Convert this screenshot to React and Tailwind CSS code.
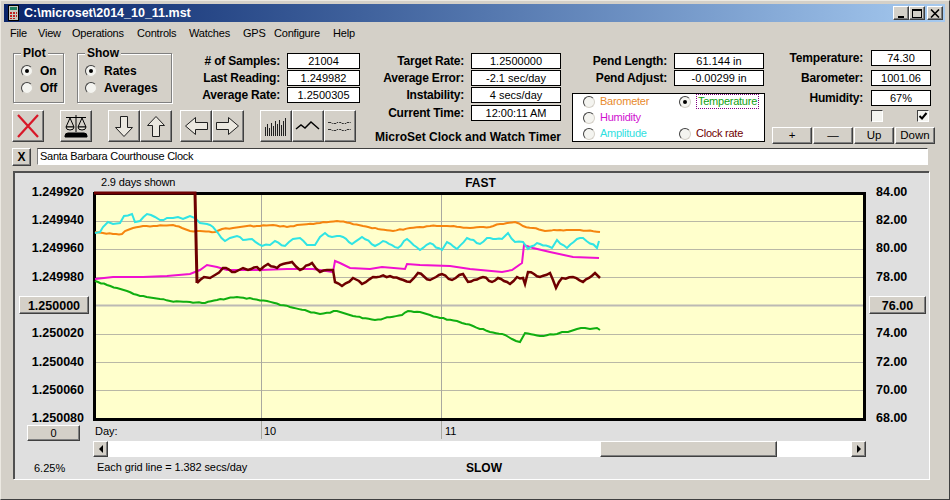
// App.jsx
import React from "react";

const bevel =
  "border border-t-white border-l-white border-r-[#404040] border-b-[#404040] bg-[#d4d0c8] shadow-[inset_-1px_-1px_0_#808080]";

const orange =
  "95,232 103,233 113,234 122,234 125,231 133,228 143,226 157,226 173,225 182,228 190,231 200,231 215,232 222,229 233,228 247,226 260,226 273,225 287,227 297,225 320,223 337,221 350,223 363,226 378,229 393,231 410,228 430,226 447,226 460,227 470,228 480,227 490,227 500,224 515,222 523,226 533,228 545,231 560,230 580,230 600,232";
const cyan =
  "95,233 100,232 103,227 108,222 113,224 120,223 124,216 132,214 135,222 140,221 147,214 155,217 160,220 167,218 173,218 178,217 183,219 190,216 195,218 200,223 207,224 213,227 218,233 225,241 230,238 237,236 243,240 252,239 262,246 270,245 275,241 285,246 293,239 300,238 307,245 315,245 320,237 325,233 332,237 337,236 343,237 352,244 362,237 375,246 383,241 398,248 407,239 420,250 430,243 442,250 447,242 457,249 467,238 480,244 487,238 493,239 502,239 508,233 515,242 523,242 528,249 537,243 552,248 557,240 567,248 577,239 583,238 597,248 599,241";
const magenta =
  "95,279 113,277 143,277 167,276 190,274 200,270 207,265 217,267 227,270 260,270 287,269 313,269 320,270 333,272 335,261 340,263 350,268 370,269 382,267 405,269 407,264 420,265 450,266 470,269 502,272 512,270 522,263 524,245 533,248 550,252 573,257 599,258";
const maroonTop = "94,193 195,193 197,283";
const maroon =
  "197,283 200,280 204,277 210,278 215,275 223,268 235,272 243,268 248,270 257,267 260,270 268,264 277,268 283,264 292,262 300,270 312,263 320,272 327,270 333,270 335,282 342,286 353,278 362,284 373,277 390,276 410,282 418,273 430,280 442,274 452,280 463,274 468,282 483,277 492,282 498,278 510,284 517,277 523,278 525,284 528,272 540,277 550,273 556,288 562,278 573,277 583,282 595,273 600,278";
const green =
  "95,281 107,285 127,291 140,296 160,299 170,301 190,302 202,303 217,300 237,297 253,299 267,301 290,307 320,314 337,311 353,316 375,320 402,315 408,311 420,312 440,318 457,321 462,323 473,326 490,332 505,335 512,339 520,342 525,333 540,336 557,334 562,332 568,332 577,329 585,328 590,329 597,328 600,330";

// the traced points are coarse, fill in the day to day wobble of the readings
const wobble = (points, amp) => {
  const pts = points.split(" ").map((p) => p.split(",").map(Number));
  const out = [];
  let n = 0;
  pts.forEach(([x, y], i) => {
    out.push(`${x},${y}`);
    const next = pts[i + 1];
    if (!next) return;
    const steps = Math.floor((next[0] - x) / 3);
    for (let s = 1; s < steps; s++) {
      n++;
      const t = s / steps;
      const off = Math.round(Math.sin(n * 2.7) * Math.cos(n * 1.3) * amp * 2) / 2;
      out.push(`${x + (next[0] - x) * t},${y + (next[1] - y) * t + off}`);
    }
  });
  return out.join(" ");
};

const leftAxis = ["1.249920", "1.249940", "1.249960", "1.249980", null, "1.250020", "1.250040", "1.250060"];
const rightAxis = ["84.00", "82.00", "80.00", "78.00", null, "74.00", "72.00", "70.00"];

const Radio = ({ on }) => (
  <span className="flex h-3 w-3 shrink-0 items-center justify-center rounded-full border border-t-[#404040] border-l-[#404040] border-r-[#d4d0c8] border-b-[#d4d0c8] bg-[#f4f4f0]">
    {on && <span className="h-1 w-1 rounded-full bg-black" />}
  </span>
);

const Group = ({ title, width, children }) => (
  <div
    className={`relative flex h-[50px] flex-col gap-[3px] border border-[#808080] pt-[10px] shadow-[inset_1px_1px_0_#fff,1px_1px_0_#fff] ${width}`}
  >
    <span className="absolute -top-[8px] left-[7px] bg-[#d4d0c8] px-[2px] text-[12px] leading-[15px] font-bold">
      {title}
    </span>
    {children}
  </div>
);

const GroupRadio = ({ on, label }) => (
  <div className="flex h-[14px] items-center gap-[7px] pl-[7px] text-[12px] font-bold">
    <Radio on={on} />
    {label}
  </div>
);

const Field = ({ label, value, labelWidth, fieldWidth, gap = "mr-[7px]" }) => (
  <div className="flex h-[16px] items-center">
    <span className={`${labelWidth} ${gap} text-right text-[12px] font-bold tracking-[-0.2px] whitespace-nowrap`}>
      {label}
    </span>
    <span className={`${fieldWidth} flex h-full items-center justify-center border border-black bg-white text-[11px]`}>
      {value}
    </span>
  </div>
);

const ToolButton = ({ children, className = "" }) => (
  <button className={`${bevel} flex h-[32px] w-[32px] items-center justify-center ${className}`}>{children}</button>
);

const Arrow = ({ points }) => (
  <svg width="26" height="26" viewBox="0 0 26 26">
    <polygon points={points} fill="#ebe8e0" stroke="#202020" strokeWidth="1" />
  </svg>
);

const SelectItem = ({ on, color, children }) => (
  <div className={`flex h-[16px] items-center gap-[5px] text-[11px] tracking-[-0.25px] ${color}`}>
    <Radio on={on} />
    {children}
  </div>
);

const SmallButton = ({ children }) => (
  <button className={`${bevel} flex h-[17px] w-[40px] items-center justify-center text-[11.5px]`}>{children}</button>
);

const TitleButton = ({ children }) => (
  <button className={`${bevel} flex h-[14px] w-[16px] items-center justify-center`}>{children}</button>
);

const Chart = () => (
  <svg width="773" height="229" viewBox="93 192 773 229" className="block overflow-visible">
    <rect x="94.5" y="193.5" width="770" height="226" fill="#ffffcc" />
    {[221, 249, 277, 334, 362, 390].map((y) => (
      <line key={y} x1="96" x2="863" y1={y + 0.5} y2={y + 0.5} stroke="#b9b8a6" />
    ))}
    <line x1="96" x2="863" y1="305.5" y2="305.5" stroke="#bcbab4" strokeWidth="2" />
    <line x1="261.5" x2="261.5" y1="195" y2="439" stroke="#aaa9a0" />
    <line x1="441.5" x2="441.5" y1="195" y2="439" stroke="#aaa9a0" />
    <rect x="94.5" y="193.5" width="770" height="226" fill="none" stroke="#000" strokeWidth="3" />
    <polyline points={wobble(orange, 0.5)} fill="none" stroke="#f5850f" strokeWidth="2" />
    <polyline points={magenta} fill="none" stroke="#f010d0" strokeWidth="2" />
    <polyline points={wobble(green, 0.5)} fill="none" stroke="#10ae10" strokeWidth="2" />
    <polyline points={wobble(cyan, 1)} fill="none" stroke="#30e4e4" strokeWidth="2" />
    <polyline points={maroonTop} fill="none" stroke="#6e0000" strokeWidth="3" />
    <polyline points={wobble(maroon, 1.2)} fill="none" stroke="#6e0000" strokeWidth="2.5" />
  </svg>
);

export default function App() {
  return (
    <div className="flex h-[500px] w-[950px] flex-col overflow-hidden border border-t-[#ece9e2] border-l-[#ece9e2] border-r-[#404040] border-b-[#404040] bg-[#d4d0c8] px-[3px] pt-[3px] font-['Liberation_Sans',Arial,sans-serif] text-black">
      {/* title bar */}
      <div className="mr-[1px] flex h-[18px] shrink-0 items-center bg-gradient-to-r from-[#0a246a] to-[#a6caf0] pr-[2px] pl-[4px]">
        <svg width="12" height="16" viewBox="0 0 12 16" className="mr-[4px]">
          <rect x="0.5" y="0.5" width="10" height="15" fill="#c8c8c0" stroke="#000" />
          <rect x="2" y="2" width="7" height="3" fill="#208060" />
          <path d="M2 7h2v2H2zM5 7h2v2H5zM8 7h1v2H8zM2 10h2v2H2zM5 10h2v2H5zM8 10h1v2H8zM2 13h2v1H2zM5 13h2v1H5z" fill="#c02020" />
        </svg>
        <span className="text-[12.5px] font-bold text-white">C:\microset\2014_10_11.mst</span>
        <div className="ml-auto flex">
          <TitleButton>
            <span className="mt-[7px] h-[2px] w-[6px] bg-black" />
          </TitleButton>
          <TitleButton>
            <span className="h-[9px] w-[10px] border border-t-2 border-black" />
          </TitleButton>
          <button className={`${bevel} ml-[2px] flex h-[14px] w-[16px] items-center justify-center`}>
            <svg width="10" height="9" viewBox="0 0 10 9">
              <path d="M1 0.5l8 8M9 0.5l-8 8" stroke="#000" strokeWidth="1.6" />
            </svg>
          </button>
        </div>
      </div>

      {/* menu */}
      <div className="flex h-[22px] shrink-0 items-center pl-[6px] text-[11px] tracking-[-0.2px]">
        <span className="w-[28px]">File</span>
        <span className="w-[34px]">View</span>
        <span className="w-[65px]">Operations</span>
        <span className="w-[52px]">Controls</span>
        <span className="w-[54px]">Watches</span>
        <span className="w-[31px]">GPS</span>
        <span className="w-[59px]">Configure</span>
        <span>Help</span>
      </div>

      {/* controls */}
      <div className="flex h-[104px] shrink-0 items-start pl-[8px]">
        <div className="flex w-[349px] flex-col pt-[9px]">
          <div className="flex items-start">
            <div className="ml-[1px] flex">
              <Group title="Plot" width="w-[51px]">
                <GroupRadio on label="On" />
                <GroupRadio label="Off" />
              </Group>
              <div className="ml-[13px]">
                <Group title="Show" width="w-[95px]">
                  <GroupRadio on label="Rates" />
                  <GroupRadio label="Averages" />
                </Group>
              </div>
            </div>
            <div className="flex flex-col gap-[1px]">
              <Field label="# of Samples:" value="21004" labelWidth="w-[108px]" fieldWidth="w-[73px]" />
              <Field label="Last Reading:" value="1.249982" labelWidth="w-[108px]" fieldWidth="w-[73px]" />
              <Field label="Average Rate:" value="1.2500305" labelWidth="w-[108px]" fieldWidth="w-[73px]" />
            </div>
          </div>
          <div className="mt-[7px] flex">
            <ToolButton>
              <svg width="26" height="26" viewBox="0 0 26 26">
                <path d="M3 2l20 22M23 2L3 24" stroke="#d81828" strokeWidth="2.2" />
              </svg>
            </ToolButton>
            <ToolButton className="ml-[16px]">
              <svg width="26" height="26" viewBox="0 0 26 26" fill="none" stroke="#000">
                <path d="M3 4.5h20M13 2v17M7 5l-4 9h8zM19 5l-4 9h8z" />
                <path d="M3 14a4 3 0 0 0 8 0zM15 14a4 3 0 0 0 8 0z" fill="#e8e4da" />
                <path d="M2 24v-1q0-3 3-3h16q3 0 3 3v1z" fill="#000" />
              </svg>
            </ToolButton>
            <ToolButton className="ml-[16px]">
              <Arrow points="9.5,3.5 16.5,3.5 16.5,14.5 21.5,14.5 13,23.5 4.5,14.5 9.5,14.5" />
            </ToolButton>
            <ToolButton>
              <Arrow points="9.5,23.5 16.5,23.5 16.5,12.5 21.5,12.5 13,3.5 4.5,12.5 9.5,12.5" />
            </ToolButton>
            <ToolButton className="ml-[8px]">
              <Arrow points="24.5,9.5 24.5,16.5 12.5,16.5 12.5,21.5 2.5,13 12.5,4.5 12.5,9.5" />
            </ToolButton>
            <ToolButton>
              <Arrow points="1.5,9.5 1.5,16.5 13.5,16.5 13.5,21.5 23.5,13 13.5,4.5 13.5,9.5" />
            </ToolButton>
            <ToolButton className="ml-[16px]">
              <svg width="26" height="26" viewBox="0 0 26 26" stroke="#202020">
                <path d="M2.5 23v-9M4.5 23v-12M6.5 23v-8M8.5 23v-13M10.5 23v-10M12.5 23v-15M14.5 23v-12M16.5 23v-16M18.5 23v-11M20.5 23v-15M22.5 23v-18" />
              </svg>
            </ToolButton>
            <ToolButton>
              <svg width="26" height="26" viewBox="0 0 26 26" fill="none" stroke="#000" strokeWidth="1.4">
                <path d="M1 16l5-4 4 3 6-6 8 7" />
              </svg>
            </ToolButton>
            <ToolButton>
              <svg width="26" height="26" viewBox="0 0 26 26" fill="none" stroke="#303030">
                <path d="M1 9.5h3l1 1h4l1-1h4l1 1h4l1-1h4M1 16.5h3l1 1h4l1-1h4l1 1h4l1-1h4" strokeDasharray="5 1" />
              </svg>
            </ToolButton>
          </div>
        </div>

        <div className="flex w-[200px] flex-col pt-[9px]">
          <div className="flex flex-col gap-[1px]">
            <Field label="Target Rate:" value="1.2500000" labelWidth="w-[103px]" fieldWidth="w-[90px]" />
            <Field label="Average Error:" value="-2.1 sec/day" labelWidth="w-[103px]" fieldWidth="w-[90px]" />
            <Field label="Instability:" value="4 secs/day" labelWidth="w-[103px]" fieldWidth="w-[90px]" />
          </div>
          <div className="mt-[2px]">
            <Field label="Current Time:" value="12:00:11 AM" labelWidth="w-[103px]" fieldWidth="w-[90px]" />
          </div>
          <div className="mt-[9px] text-right text-[12px] leading-[14px] font-bold whitespace-nowrap">
            MicroSet Clock and Watch Timer
          </div>
        </div>

        <div className="ml-[11px] flex w-[193px] flex-col pt-[9px]">
          <div className="flex flex-col gap-[1px]">
            <Field label="Pend Length:" value="61.144 in" labelWidth="w-[95px]" fieldWidth="w-[90px]" />
            <Field label="Pend Adjust:" value="-0.00299 in" labelWidth="w-[95px]" fieldWidth="w-[90px]" />
          </div>
          <div className="mt-[7px] grid h-[49px] w-[193px] grid-cols-[96px_1fr] content-center border border-black bg-white pl-[10px]">
            <SelectItem color="text-[#e88a2c]">Barometer</SelectItem>
            <SelectItem on color="text-[#10a010]">
              <span className="border border-dotted border-[#800080] px-[1px] leading-[13px] whitespace-nowrap">Temperature</span>
            </SelectItem>
            <SelectItem color="text-[#d010d0]">Humidity</SelectItem>
            <div />
            <SelectItem color="text-[#30e0e0]">Amplitude</SelectItem>
            <SelectItem color="text-[#700000]">Clock rate</SelectItem>
          </div>
        </div>

        <div className="ml-[7px] flex w-[164px] flex-col pt-[6px]">
          <div className="flex flex-col gap-[4px]">
            <Field label="Temperature:" value="74.30" labelWidth="w-[91px]" fieldWidth="w-[60px]" gap="mr-[8px]" />
            <Field label="Barometer:" value="1001.06" labelWidth="w-[91px]" fieldWidth="w-[60px]" gap="mr-[8px]" />
            <Field label="Humidity:" value="67%" labelWidth="w-[91px]" fieldWidth="w-[60px]" gap="mr-[8px]" />
          </div>
          <div className="mt-[4px] flex pl-[99px]">
            <span className="h-3 w-3 border border-t-[#404040] border-l-[#404040] border-r-white border-b-white bg-[#f4f4f0]" />
            <span className="ml-[34px] flex h-3 w-3 items-center justify-center border border-t-[#404040] border-l-[#404040] border-r-white border-b-white bg-[#f4f4f0]">
              <svg width="10" height="10" viewBox="0 0 10 10">
                <path d="M1.5 5l2.5 2.5L8.5 2" fill="none" stroke="#000" strokeWidth="2" />
              </svg>
            </span>
          </div>
          <div className="mt-[5px] flex gap-[1px]">
            <SmallButton>+</SmallButton>
            <SmallButton>—</SmallButton>
            <SmallButton>Up</SmallButton>
            <SmallButton>Down</SmallButton>
          </div>
        </div>
      </div>

      {/* clock name */}
      <div className="flex h-[18px] shrink-0 pl-[8px]">
        <button className={`${bevel} flex h-[18px] w-[19px] items-center justify-center text-[12px] font-bold`}>X</button>
        <div className="ml-[6px] flex h-[17px] w-[891px] items-center border border-t-[#404040] border-l-[#808080] border-r-white border-b-white bg-white pl-[2px] text-[11px] tracking-[-0.27px]">
          Santa Barbara Courthouse Clock
        </div>
      </div>

      {/* chart panel */}
      <div className="mt-[5px] ml-[9px] flex h-[308px] w-[916px] shrink-0 border-2 border-t-[#505050] border-l-[#505050] border-r-0 border-b-0 bg-[#dfdfdf] shadow-[1px_1px_0_#fff]">
        <div className="flex w-[78px] flex-col">
          <div className="h-[5px]" />
          {leftAxis.map((label) =>
            label ? (
              <div key={label} className="flex h-[28.3px] items-center justify-end pr-[9px] text-[12.5px] font-bold">
                {label}
              </div>
            ) : (
              <div key="mid" className="flex h-[28.3px] items-center pl-[4px]">
                <button className={`${bevel} h-[18px] w-[70px] text-[12.5px] font-bold`}>1.250000</button>
              </div>
            )
          )}
          <div className="h-[21px] pt-[7px] pr-[9px] text-right text-[12.5px] leading-[14px] font-bold">1.250080</div>
          <button className={`${bevel} ml-[12px] h-[16px] w-[53px] text-[11px] leading-[14px]`}>0</button>
          <div className="mt-[20px] pl-[19px] text-[11px] leading-[14px]">6.25%</div>
        </div>

        <div className="flex w-[773px] flex-col">
          <div className="grid h-[19px] grid-cols-[1fr_auto_1fr] items-center text-[11px]">
            <span className="pl-[8px] tracking-[-0.15px]">2.9 days shown</span>
            <span className="ml-[2px] text-[12px] font-bold">FAST</span>
          </div>
          <Chart />
          <div className="flex h-[20px] items-center text-[11px]">
            <span className="w-[171px] pl-[2px]">Day:</span>
            <span className="w-[181px]">10</span>
            <span>11</span>
          </div>
          <div className="flex h-[16px]">
            <button className={`${bevel} flex w-[15px] items-center justify-center`}>
              <span className="h-0 w-0 border-y-[4px] border-r-[4px] border-y-transparent border-r-black" />
            </button>
            <div className="w-[492px] bg-white" />
            <div className={`${bevel} w-[177px]`} />
            <div className="w-[74px] bg-white" />
            <button className={`${bevel} flex w-[15px] items-center justify-center`}>
              <span className="h-0 w-0 border-y-[4px] border-l-[4px] border-y-transparent border-l-black" />
            </button>
          </div>
          <div className="grid h-[21px] grid-cols-[1fr_auto_1fr] items-center text-[11px]">
            <span className="pl-[4px] tracking-[-0.1px]">Each grid line = 1.382 secs/day</span>
            <span className="ml-[9px] text-[12px] font-bold">SLOW</span>
          </div>
        </div>

        <div className="flex w-[63px] flex-col">
          <div className="h-[5px]" />
          {rightAxis.map((label) =>
            label ? (
              <div key={label} className="flex h-[28.3px] items-center pl-[10px] text-[12.5px] font-bold">
                {label}
              </div>
            ) : (
              <div key="mid" className="flex h-[28.3px] items-center pl-[3px]">
                <button className={`${bevel} h-[18px] w-[57px] text-[12.5px] font-bold`}>76.00</button>
              </div>
            )
          )}
          <div className="h-[21px] pt-[7px] pl-[10px] text-[12.5px] leading-[14px] font-bold">68.00</div>
        </div>
      </div>
    </div>
  );
}
